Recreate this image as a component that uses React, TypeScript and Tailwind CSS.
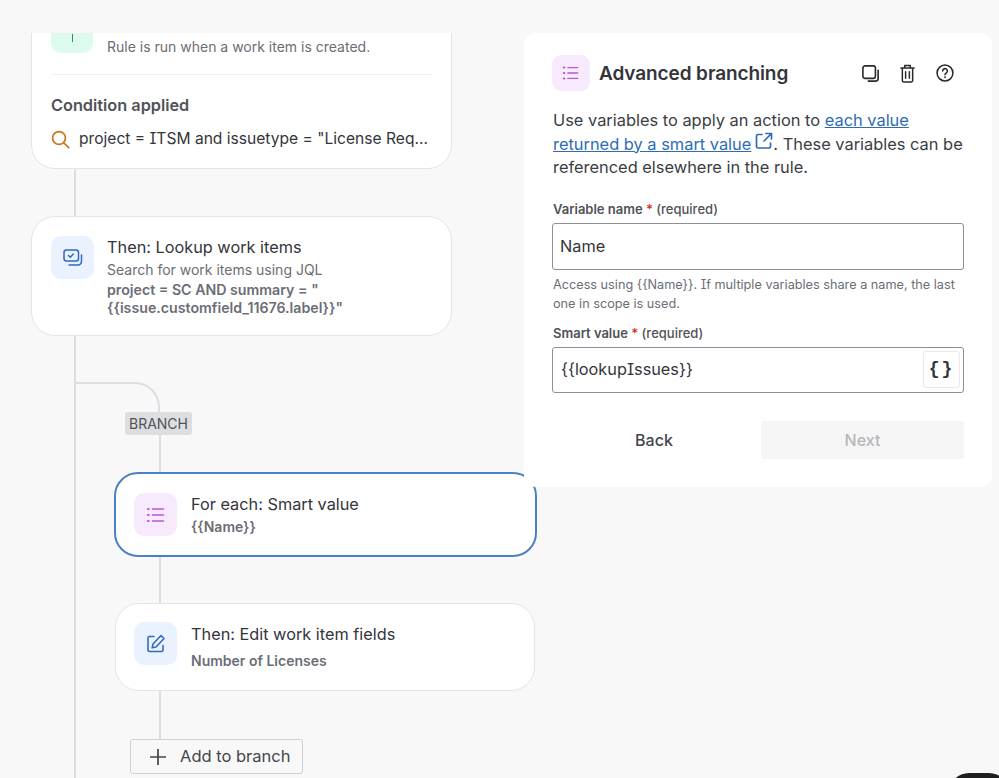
import React from "react";

const font = "[font-family:Inter,'Noto_Sans',sans-serif] [font-feature-settings:'cv08']";

function ListIcon({ size = 20 }: { size?: number }) {
  return (
    <svg width={size} height={size} viewBox="0 0 20 20" fill="none" stroke="#b65ad0" strokeWidth="1.5" strokeLinecap="round">
      <path d="M6.5 4h11M6.5 10h11M6.5 16h11" />
      <path d="M2 4h.6M2 10h.6M2 16h.6" strokeWidth="2.2" />
    </svg>
  );
}

function LookupIcon() {
  return (
    <svg width="20" height="20" viewBox="0 0 20 20" fill="none" stroke="#2f6cc0" strokeWidth="1.5" strokeLinecap="round" strokeLinejoin="round">
      <rect x="1" y="2" width="14.5" height="11" rx="2.5" />
      <path d="M5.5 7.5l1.8 1.8 3-3.3" />
      <path d="M18.5 7v6.5a3.5 3.5 0 0 1-3.5 3.5H6" />
    </svg>
  );
}

function EditIcon() {
  return (
    <svg width="20" height="20" viewBox="0 0 20 20" fill="none" stroke="#2f6cc0" strokeWidth="1.6" strokeLinecap="round" strokeLinejoin="round">
      <path d="M8 2.5H3.5a1.5 1.5 0 0 0-1.5 1.5v12a1.5 1.5 0 0 0 1.5 1.500h12a1.500 1.500 0 0 0 1.500-1.500v-4.500" />
      <path d="M15 1.500l3 3-8 8.500-3.800.800.800-3.800z" />
    </svg>
  );
}

function Tile({ children, tone }: { children?: React.ReactNode; tone: "blue" | "purple" }) {
  return (
    <div className={`w-[43px] h-[43px] shrink-0 rounded-[10px] flex items-center justify-center ${tone === "blue" ? "bg-[#e9f2fe]" : "bg-[#f8eafd]"}`}>
      {children}
    </div>
  );
}

function Connector({ h }: { h: string }) {
  return <div className={`${h} w-[2px] bg-[#dddee1]`} />;
}

export default function App() {
  return (
    <div className={`${font} relative w-[999px] h-[778px] overflow-hidden bg-[#f8f8f8] text-[#34353a]`}>
      <div className="pt-[33px] h-full">
        <div className="relative h-full overflow-hidden pl-[31px]">
          {/* Main rule trunk */}
          <div className="absolute left-[74px] top-0 bottom-0 w-[2px] bg-[#dddee1]" />

          {/* Trigger card */}
          <div className="relative w-[421px] mt-[-43px] h-[179px] rounded-[24px] bg-white border border-[#e4e5e8] px-[19px] pt-[19px]">
            <div className="flex gap-[14px]">
              <div className="w-[42px] h-[43px] shrink-0 rounded-[10px] bg-[#dcfbee] flex justify-center">
                <div className="w-[1px] h-[8px] mt-[24px] bg-[#2f8a6a]" />
              </div>
              <div className="pt-[28px] text-[14px] leading-[18px] text-[#6b6e76]">Rule is run when a work item is created.</div>
            </div>
            <div className="mt-[18px] h-[1px] bg-[#f0f1f2]" />
            <div className="mt-[20px] text-[16.3px] leading-[20px] font-semibold text-[#505258]">Condition applied</div>
            <div className="mt-[14px] flex items-center gap-[9px] text-[15.6px] leading-[20px] whitespace-nowrap">
              <svg width="19" height="19" viewBox="0 0 19 19" fill="none" stroke="#c9761f" strokeWidth="1.7" strokeLinecap="round" className="shrink-0">
                <circle cx="8" cy="8" r="6.4" />
                <path d="M13 13l4.600 4.600" />
              </svg>
              <span>project = ITSM and issuetype = "License Req...</span>
            </div>
          </div>

          <div className="pl-[43px]"><Connector h="h-[47px]" /></div>

          {/* Lookup card */}
          <div className="relative w-[421px] h-[120px] rounded-[24px] bg-white border border-[#e4e5e8] px-[19px] pt-[19px] flex gap-[13px]">
            <Tile tone="blue"><LookupIcon /></Tile>
            <div>
              <div className="text-[16.3px] leading-[22px]">Then: Lookup work items</div>
              <div className="mt-[2px] text-[14px] leading-[19px] text-[#6b6e76]">Search for work items using JQL</div>
              <div className="mt-[2px] text-[14.2px] leading-[18px] font-semibold text-[#6b6e76] w-[300px]">
                project = SC AND summary = "<br />{"{{issue.customfield_11676.label}}"}"
              </div>
            </div>
          </div>

          {/* Branch */}
          <div className="relative pl-[83px]">
            <svg className="absolute left-[44px] top-[46px]" width="86" height="34" viewBox="0 0 86 34" fill="none" stroke="#dddee1" strokeWidth="2">
              <path d="M0 1H60a24 24 0 0 1 24 24V34" />
            </svg>
            <div className="h-[76px]" />
            <div className="w-[67px] ml-[11px] h-[23px] rounded-[3px] bg-[#dddee1] text-[#505258] text-[14px] leading-[23px] text-center relative">BRANCH</div>
            <div className="ml-[45px]"><Connector h="h-[37px]" /></div>

            {/* Selected node */}
            <div className="relative w-[423px] h-[85px] rounded-[24px] bg-white border-2 border-[#4c80c4] pl-[18px] pt-[19px] flex gap-[14px]">
              <Tile tone="purple"><ListIcon /></Tile>
              <div>
                <div className="text-[16.3px] leading-[22px]">For each: Smart value</div>
                <div className="text-[14px] leading-[18px] font-semibold text-[#6b6e76] mt-[3px]">{"{{Name}}"}</div>
              </div>
            </div>

            <div className="ml-[45px]"><Connector h="h-[46px]" /></div>

            {/* Edit node */}
            <div className="relative ml-[1px] w-[420px] h-[88px] rounded-[24px] bg-white border border-[#e4e5e8] pl-[18px] pt-[18px] flex gap-[14px]">
              <Tile tone="blue"><EditIcon /></Tile>
              <div className="pt-[1px]">
                <div className="text-[16.3px] leading-[22px]">Then: Edit work item fields</div>
                <div className="text-[14px] leading-[18px] font-semibold text-[#6b6e76] mt-[7px]">Number of Licenses</div>
              </div>
            </div>

            <div className="ml-[45px]"><Connector h="h-[48px]" /></div>

            <div className="relative ml-[16px] w-[173px] h-[35px] rounded-[3px] border border-[#d0d1d4] bg-[#f8f8f8] flex items-center pl-[18px] gap-[13px] text-[16.5px] text-[#44464c]">
              <svg width="18" height="18" viewBox="0 0 18 18" fill="none" stroke="#44464c" strokeWidth="1.7">
                <path d="M9 1v16M1 9h16" />
              </svg>
              Add to branch
            </div>
          </div>
        </div>
      </div>

      {/* Configuration panel */}
      <div className="absolute left-[524px] top-[33px] w-[468px] h-[454px] rounded-[12px] bg-white pl-[28px] pr-[28px] pt-[22px]">
        <div className="flex items-center h-[36px]">
          <div className="w-[38px] h-[36px] rounded-[9px] bg-[#f8eafd] flex items-center justify-center shrink-0">
            <ListIcon size={18} />
          </div>
          <div className="ml-[9px] pt-[2px] text-[19px] font-semibold tracking-[-0.1px]">Advanced branching</div>
          <div className="ml-auto mr-[10px] flex items-center gap-[21px]">
            <svg width="17" height="17" viewBox="0 0 19 19" fill="none" stroke="#292a2e" strokeWidth="1.8" strokeLinecap="round" strokeLinejoin="round">
              <rect x="1" y="1" width="14" height="14" rx="2.5" />
              <path d="M18 6v9.500a2.500 2.500 0 0 1-2.500 2.500H7" />
            </svg>
            <svg width="15" height="19" viewBox="0 0 16 20" fill="none" stroke="#292a2e" strokeWidth="1.6" strokeLinecap="round" strokeLinejoin="round">
              <path d="M1 4h14M5 4V1.500h6V4M2.500 4v13.500A1.500 1.500 0 0 0 4 19h8a1.500 1.500 0 0 0 1.500-1.500V4M6 8v7M10 8v7" />
            </svg>
            <svg width="18" height="18" viewBox="0 0 20 20" fill="none" stroke="#292a2e" strokeWidth="1.7" strokeLinecap="round" strokeLinejoin="round">
              <circle cx="10" cy="10" r="8.800" />
              <path d="M7.400 7.800a2.600 2.600 0 1 1 4.100 2.100c-.9.600-1.500 1-1.500 2" />
              <path d="M10 14.700v.1" strokeWidth="2" />
            </svg>
          </div>
        </div>

        <p className="mt-[18px] ml-[1px] w-[414px] text-[16.4px] leading-[23.5px] text-[#3b3d42]">
          Use variables to apply an action to{" "}
          <a className="text-[#2e6cb5] underline">each value returned by a smart value</a>
          <svg width="18" height="18" viewBox="0 0 18 18" fill="none" stroke="#2e6cb5" strokeWidth="1.7" strokeLinecap="round" strokeLinejoin="round" className="inline-block ml-[4px] mt-[-6px] align-baseline">
            <path d="M7 2.500H3A1.500 1.500 0 0 0 1.500 4v10.500A1.500 1.500 0 0 0 3 16h11a1.500 1.500 0 0 0 1.500-1.500V11" />
            <path d="M11 1.500h5.500V7M16.500 1.500L9 9" />
          </svg>
          . These variables can be referenced elsewhere in the rule.
        </p>

        <div className="mt-[20px] ml-[1px] text-[13px] leading-[18px] font-semibold text-[#505258]">
          Variable name <span className="text-[#c9372c]">*</span> <span className="font-medium">(required)</span>
        </div>
        <div className="mt-[5px] h-[47px] rounded-[3px] border border-[#8c8f97] flex items-center pl-[7px] text-[16.3px]">Name</div>
        <p className="mt-[5px] ml-[1px] w-[411px] text-[12.7px] leading-[19.5px] text-[#6b6e76]">
          Access using {"{{Name}}"}. If multiple variables share a name, the last one in scope is used.
        </p>

        <div className="mt-[10px] ml-[1px] text-[13px] leading-[18px] font-semibold text-[#505258]">
          Smart value <span className="text-[#c9372c]">*</span> <span className="font-medium">(required)</span>
        </div>
        <div className="mt-[5px] h-[46px] rounded-[3px] border border-[#8c8f97] flex items-center justify-between pl-[8px] pr-[3px] text-[16.3px]">
          <span>{"{{lookupIssues}}"}</span>
          <div className="w-[37px] h-[37px] rounded-[3px] border border-[#e8e9eb] flex items-center justify-center text-[18px] font-bold tracking-[2px] [font-family:'Liberation_Mono',monospace]">{"{}"}</div>
        </div>

        <div className="mt-[28px] flex">
          <div className="w-[204px] h-[38px] flex items-center justify-center text-[16px] font-medium text-[#44464c]">Back</div>
          <div className="ml-[5px] w-[203px] h-[38px] rounded-[3px] bg-[#f5f5f6] flex items-center justify-center text-[16px] font-medium text-[#b5b7bb]">Next</div>
        </div>
      </div>

      {/* Floating control peeking in at the bottom corner */}
      <div className="absolute left-[949px] top-[773px] w-[60px] h-[40px] rounded-[20px] bg-[#1f1f21]" />
    </div>
  );
}
